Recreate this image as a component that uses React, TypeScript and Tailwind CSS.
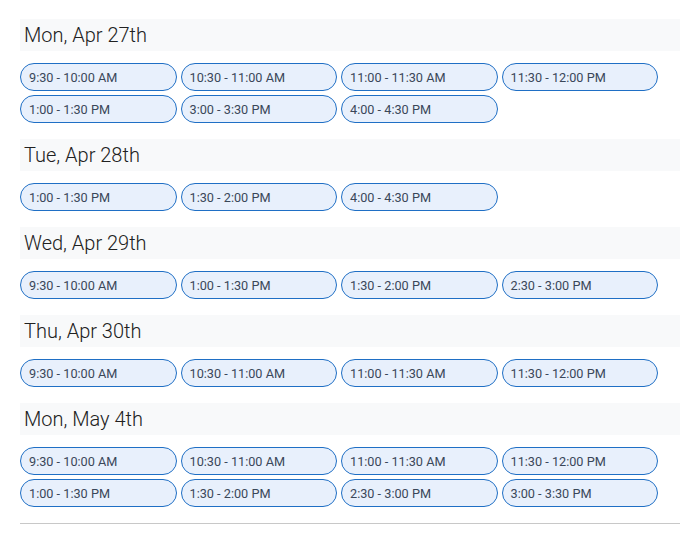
const days: { label: string; slots: string[] }[] = [
  {
    label: "Mon, Apr 27th",
    slots: [
      "9:30 - 10:00 AM",
      "10:30 - 11:00 AM",
      "11:00 - 11:30 AM",
      "11:30 - 12:00 PM",
      "1:00 - 1:30 PM",
      "3:00 - 3:30 PM",
      "4:00 - 4:30 PM",
    ],
  },
  { label: "Tue, Apr 28th", slots: ["1:00 - 1:30 PM", "1:30 - 2:00 PM", "4:00 - 4:30 PM"] },
  {
    label: "Wed, Apr 29th",
    slots: ["9:30 - 10:00 AM", "1:00 - 1:30 PM", "1:30 - 2:00 PM", "2:30 - 3:00 PM"],
  },
  {
    label: "Thu, Apr 30th",
    slots: ["9:30 - 10:00 AM", "10:30 - 11:00 AM", "11:00 - 11:30 AM", "11:30 - 12:00 PM"],
  },
  {
    label: "Mon, May 4th",
    slots: [
      "9:30 - 10:00 AM",
      "10:30 - 11:00 AM",
      "11:00 - 11:30 AM",
      "11:30 - 12:00 PM",
      "1:00 - 1:30 PM",
      "1:30 - 2:00 PM",
      "2:30 - 3:00 PM",
      "3:00 - 3:30 PM",
    ],
  },
];

export default function App() {
  return (
    <div className="min-h-screen w-full bg-white px-5 pt-[19px] font-['Roboto',sans-serif]">
      {days.map((day) => (
        <section key={day.label} className="mb-4">
          <h2 className="h-8 bg-[#f8f9fa] pl-1 text-[20px] font-light leading-8 text-[#212121]">
            {day.label}
          </h2>
          <div className="mt-3 grid grid-cols-[repeat(4,156.5px)] gap-1">
            {day.slots.map((slot) => (
              <button
                key={slot}
                type="button"
                className="h-7 rounded-[14px] border border-[#1f6fc5] bg-[#e8f0fc] pl-2 pt-[3px] text-left text-[12.7px] leading-none text-[#3a4759]"
              >
                {slot}
              </button>
            ))}
          </div>
        </section>
      ))}
      <div className="border-t border-[#c8c8c8]" />
    </div>
  );
}
